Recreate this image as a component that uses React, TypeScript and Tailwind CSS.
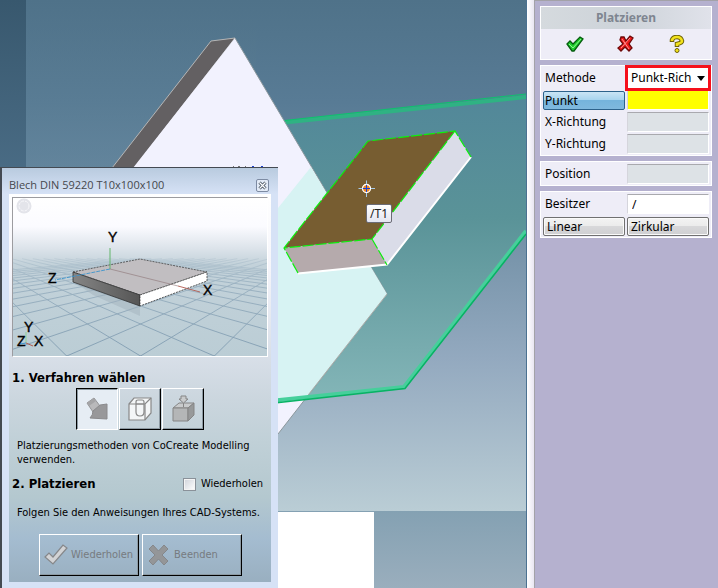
import { ReactNode } from "react";

const uiFont = "font-['Noto_Sans','Open_Sans',sans-serif]";
const titleFont = "font-['Open_Sans','Noto_Sans',sans-serif]";
const dialogFont = "font-['DejaVu_Sans_Condensed','DejaVu_Sans',sans-serif]";

const Scene = () => (
  <svg
    className="absolute inset-0 h-full w-full"
    viewBox="0 0 526 588"
    preserveAspectRatio="xMinYMin slice"
    aria-hidden="true"
  >
    <defs>
      <linearGradient id="sky" x1="0" y1="0" x2="0" y2="1">
        <stop offset="0" stopColor="#4f7289" />
        <stop offset="0.2" stopColor="#587b95" />
        <stop offset="0.45" stopColor="#7290a6" />
        <stop offset="0.7" stopColor="#93a9bf" />
        <stop offset="1" stopColor="#bacdd5" />
      </linearGradient>
      <linearGradient id="strip" x1="0" y1="0" x2="0" y2="1">
        <stop offset="0" stopColor="#38586e" />
        <stop offset="0.3" stopColor="#4a6c85" />
        <stop offset="0.85" stopColor="#819fb1" />
        <stop offset="1" stopColor="#9aaebd" />
      </linearGradient>
      <linearGradient id="skyTop" x1="0" y1="0" x2="0" y2="1">
        <stop offset="0" stopColor="#4f7289" />
        <stop offset="1" stopColor="#61849b" />
      </linearGradient>
      <linearGradient id="plane" x1="0" y1="0" x2="0" y2="1">
        <stop offset="0" stopColor="#528799" />
        <stop offset="0.4" stopColor="#5a9398" />
        <stop offset="1" stopColor="#84b6b8" />
      </linearGradient>
    </defs>
    <rect width="526" height="588" fill="url(#strip)" />
    <rect x="26" width="500" height="511" fill="url(#sky)" />
    <rect x="26" width="230" height="168" fill="url(#skyTop)" opacity="0.6" />
    <rect x="270" y="512" width="104" height="76" fill="#fff" />

    {/* green reference plane */}
    <path d="M280 122 526 95V232L404 388 270 402Z" fill="url(#plane)" />
    <path d="M280 123 526 97" stroke="#2fb283" strokeWidth="4" />
    <path d="M280 121 526 94" stroke="#0cc46c" strokeWidth="1" />

    {/* large plate */}
    <path d="M211 41 235 38 134 168H112Z" fill="#636062" stroke="#b5b5b5" />
    <path d="M235 38 387 294 278 434H100V210Z" fill="#f2f2fe" />
    <path d="M235 38 387 294 278 434" fill="none" stroke="#8b979c" strokeWidth="1" />
    <path d="M311 167 387 294 305 399 270 403V218Z" fill="#d7f3f3" />
    <path d="M387 294 305 399" stroke="#a9aeaa" />
    <path d="M270 401 404 387 526 231" fill="none" stroke="#46cf9b" strokeWidth="4" />
    <path d="M270 403.5 405 388.500 526 234" fill="none" stroke="#08b264" strokeWidth="1.500" />

    {/* part being placed */}
    <path d="M368 141 455 131 372 239 284 248Z" fill="#775d31" />
    <path d="M284 248 372 239 387 265 298 273Z" fill="#b5aaac" />
    <path d="M455 131 471 157 387 265 372 239Z" fill="#dadce8" />
    <path d="M298 273.500 387 264.500 471 157" fill="none" stroke="#fff" strokeWidth="2" />
    <path
      d="M298 273 284 248 368 141 455 131 471 157M455 131 372 239 284 248M372 239 387 265"
      fill="none"
      stroke="#0cf00c"
      strokeWidth="1.200"
      strokeDasharray="11 2"
    />

    {/* cursor */}
    <circle cx="366.500" cy="188.500" r="4" fill="#f28a1c" stroke="#fff" strokeWidth="1.300" />
    <path d="M358.500 188.500h4M371 188.500h4M366.500 180.500v4M366.500 193v4" stroke="#a9cbe8" strokeWidth="1" />
    <path d="M363 188.500h7M366.500 185v7" stroke="#1c3fd0" strokeWidth="1" />
    <path d="M233 166.500h1M238 166.500h2M245 166.500h1" stroke="#777" />
    <path d="M252 166.500h2M261 166.500h2" stroke="#1c3fd0" />
  </svg>
);

// Perspective floor grid, vanishing points left and right of the plate
const gridLines = Array.from({ length: 31 }, (_, i) => i - 15).flatMap((c) =>
  [1, -1].map((side) => {
    const point = (n: number) => {
      const depth = 2.56 + n / 2;
      return `${(127.5 + (side * (c * 2 + n) * 94.5) / depth).toFixed(1)} ${(44 + 292 / depth).toFixed(1)}`;
    };
    return `M${point(-1)}L${point(30)}`;
  }),
);

const Preview = () => (
  <svg
    className="block w-full border border-t-[#9c9ca0] border-l-[#9c9ca0] border-r-white border-b-white"
    viewBox="0 0 254 158"
    role="img"
    aria-label="Vorschau"
  >
    <defs>
      <linearGradient id="floor" x1="0" y1="0" x2="0" y2="1">
        <stop offset="0" stopColor="#ffffff" />
        <stop offset="0.18" stopColor="#fbfbff" />
        <stop offset="0.32" stopColor="#dce3ea" />
        <stop offset="0.42" stopColor="#c3d2da" />
        <stop offset="1" stopColor="#bbcdd5" />
      </linearGradient>
      <linearGradient id="fade" x1="0" y1="0" x2="0" y2="1">
        <stop offset="0.3" stopColor="#000" />
        <stop offset="0.55" stopColor="#999" />
        <stop offset="1" stopColor="#fff" />
      </linearGradient>
      <mask id="gridMask">
        <rect width="254" height="158" fill="url(#fade)" />
      </mask>
      <linearGradient id="side" x1="0" y1="0" x2="1" y2="0">
        <stop offset="0" stopColor="#858585" />
        <stop offset="1" stopColor="#555" />
      </linearGradient>
    </defs>
    <rect width="254" height="158" fill="url(#floor)" />
    <path d={gridLines.join("")} stroke="#7f9bb0" strokeWidth="0.900" mask="url(#gridMask)" />
    <circle cx="11" cy="8" r="7.500" fill="#e3e4ea" />
    <circle cx="11" cy="8" r="5" fill="none" stroke="#f8f8fb" strokeDasharray="3 1" />
    <path d="M61 84 127 108V118L80 97Z" fill="#9fb0ba" opacity="0.45" />
    <path d="M60 74 127 61 194 74 127 97Z" fill="#c1bec1" stroke="#444" strokeDasharray="2 1" strokeWidth="0.800" />
    <path d="M60 74 127 97V108L60 84Z" fill="url(#side)" stroke="#333" strokeWidth="0.800" />
    <path d="M127 97 194 74V83L127 108Z" fill="#fff" stroke="#333" strokeDasharray="2 1" strokeWidth="0.800" />
    <path d="M97 71V50" stroke="#63b56b" />
    <path d="M97 71 42 82" stroke="#3c94cd" strokeDasharray="4 1" strokeWidth="0.900" />
    <path d="M97 71 165 88" stroke="#8c7476" strokeWidth="0.600" />
    <path d="M165 88 187 94" stroke="#b05a50" strokeWidth="0.900" />
    <path d="M13 145V134" stroke="#8fcf96" />
    <path d="M13 145 20 148" stroke="#b05a50" />
    <path d="M13 145 7 146" stroke="#3c94cd" />
    <g fontFamily="Liberation Sans, sans-serif" fontSize="14" fill="#000" stroke="#000" strokeWidth="0.400">
      <text x="95" y="44">Y</text>
      <text x="35" y="85">Z</text>
      <text x="190" y="97">X</text>
      <text x="11" y="134">Y</text>
      <text x="4" y="148">Z</text>
      <text x="21" y="148">X</text>
    </g>
  </svg>
);

const raised = "border border-t-white border-l-white border-r-black border-b-black shadow-[inset_-1px_-1px_0_#8d9aa3]";

const PlacementDialog = () => (
  <section
    className={`relative mt-[167px] flex w-[278px] flex-1 flex-col border-t border-l-2 border-t-[#444a52] border-l-[#444a52] bg-[#d6e2f6] pr-[7px] pb-[6px] pl-[7px] text-[11px] leading-[14px] text-black ${dialogFont}`}
  >
    <header className="-mx-[7px] flex h-[26px] items-center justify-between bg-linear-to-b from-[#b9cbdf] to-[#d6e2f6] pt-[8px] pr-[9px] pl-[7px]">
      <h1 className={`text-[11px] text-[#46484d] ${titleFont}`}>Blech DIN 59220 T10x100x100</h1>
      <button
        type="button"
        aria-label="Schließen"
        className="flex h-[13px] w-[13px] items-center justify-center rounded-[2px] border border-[#7d8ba3] bg-[#e3ebf7]"
      >
        <svg width="9" height="9" viewBox="0 0 9 9">
          <path d="M1.500 1.500 7.500 7.500M7.500 1.500 1.500 7.500" stroke="#45505f" strokeWidth="3" />
          <path d="M1.500 1.500 7.500 7.500M7.500 1.500 1.500 7.500" stroke="#fff" strokeWidth="1.200" />
        </svg>
      </button>
    </header>
    <div className="flex flex-1 flex-col bg-[linear-gradient(to_bottom,#ffffff_0%,#f4f4fa_20%,#d8dfe8_42%,#cbd6de_53%,#c0d0d7_64%,#b4c8cf_78%,#a4bcd0_89%,#99afc0_100%)] px-[3px] pt-[3px]">
      <Preview />
      <h2 className="mt-[13px] text-[13px] leading-[16px] font-bold">1. Verfahren wählen</h2>
      <div className="mt-[2px] ml-[64px] flex gap-px">
        <button
          type="button"
          aria-label="Platzierungsmethode"
          aria-pressed="true"
          className="flex h-[42px] w-[42px] items-center justify-center border border-t-black border-l-black border-r-white border-b-white bg-[#e6edf4] shadow-[inset_1px_1px_0_#8d9aa3]"
        >
          <svg width="24" height="26" viewBox="0 0 24 26">
            <path d="M2 7 9 2 15 10 8 16Z" fill="#b9b9bb" stroke="#949496" />
            <path d="M2 7 9 2 11 5 4 10Z" fill="#a5a5a7" />
            <path d="M8 15 15 9 22 8V23L5 22Q8 19 8 15Z" fill="#98989a" stroke="#8a8a8c" />
          </svg>
        </button>
        <button type="button" aria-label="Quader" className={`flex h-[42px] w-[42px] items-center justify-center ${raised}`}>
          <svg width="26" height="26" viewBox="0 0 26 26" fill="none" stroke="#888" strokeWidth="1.200">
            <path d="M2 8 7 2H24V17L18 24H2Z" fill="#f4f6f7" />
            <path d="M2 8H18L24 2M18 8V24" />
            <path d="M9 16V6Q9 4 11 4H15Q17 4 17 6V16Q17 20 13 20T9 16ZM9 8H17" />
          </svg>
        </button>
        <button type="button" aria-label="Einfügen" className={`flex h-[42px] w-[42px] items-center justify-center ${raised}`}>
          <svg width="26" height="28" viewBox="0 0 26 28" stroke="#858585">
            <path d="M3 13 9 8H24L18 13Z" fill="#c9cbcc" />
            <path d="M3 13H18V26H3Z" fill="#b4b6b7" />
            <path d="M18 13 24 8V20L18 26Z" fill="#97999a" />
            <path d="M11 1H16V4H18L13.500 8 9 4H11Z" fill="#c9cbcc" />
            <path d="M13.500 8V12" />
          </svg>
        </button>
      </div>
      <p className="mt-[9px] pr-[8px] pl-[5px]">Platzierungsmethoden von CoCreate Modelling verwenden.</p>
      <div className="mt-[9px] flex items-center justify-between pr-[5px]">
        <h2 className="text-[13px] leading-[16px] font-bold">2. Platzieren</h2>
        <label className="flex items-center gap-[5px]">
          <input
            type="checkbox"
            className="h-[13px] w-[13px] appearance-none border border-[#8a9199] bg-linear-to-br from-[#cfd3da] to-white shadow-[inset_0_0_0_1px_#f4f4f4]"
          />
          Wiederholen
        </label>
      </div>
      <p className="mt-[14px] pl-[5px]">Folgen Sie den Anweisungen Ihres CAD-Systems.</p>
      <div className="mt-[14px] mb-[6px] flex gap-[3px] pl-[27px]">
        <button type="button" className={`flex h-[42px] w-[100px] items-center gap-[3px] pl-[4px] text-[#777b80] ${raised}`}>
          <svg className="shrink-0" width="24" height="22" viewBox="0 0 24 22">
            <path d="M1 13 5 9 9 13 19 1 23 4 9 20Z" fill="#d2d3d5" stroke="#85878a" strokeWidth="1.200" />
          </svg>
          Wiederholen
        </button>
        <button type="button" className={`flex h-[42px] w-[100px] items-center gap-[5px] pl-[5px] text-[#777b80] ${raised}`}>
          <svg className="shrink-0" width="21" height="22" viewBox="0 0 21 22">
            <path d="M5 1 10.500 7 16 1 20 5 14 11 20 17 16 21 10.500 15 5 21 1 17 7 11 1 5Z" fill="#949698" stroke="#85878a" />
          </svg>
          Beenden
        </button>
      </div>
    </div>
  </section>
);

const Card = ({ children }: { children: ReactNode }) => (
  <div className="border border-white bg-[#eeedf7] px-[2px] pt-px">{children}</div>
);

const fieldClass =
  "h-[20px] w-full min-w-0 border border-t-[#a9a9ae] border-l-[#d5d5dc] border-r-white border-b-white px-[4px] outline-none";

const Field = ({ id, label, value = "", color = "bg-[#dde2e6]" }: { id: string; label: string; value?: string; color?: string }) => (
  <div className="grid h-[22px] grid-cols-2 items-center gap-[2px]">
    <label htmlFor={id} className="pl-[2px]">
      {label}
    </label>
    <input id={id} type="text" defaultValue={value} className={`${fieldClass} ${color}`} />
  </div>
);

const greyButton =
  "h-[19px] rounded-[2px] border border-[#707070] bg-[linear-gradient(to_bottom,#f3f3f3_0%,#ebebeb_50%,#d8d8da_50%,#cfcfd2_100%)] px-[3px] text-left leading-[17px] shadow-[inset_0_0_0_1px_#fafafa]";

const PlacePanel = () => (
  <aside
    className={`flex w-[184px] shrink-0 flex-col gap-[5px] border-t border-l border-[#a3a2a8] bg-[#b5b1cf] pt-[5px] pr-[6px] pl-[5px] text-[12px] leading-[16px] text-black ${uiFont}`}
  >
    <div className="h-[54px] border border-white bg-[#eeedf7]">
      <h2 className="h-[22px] bg-linear-to-r from-[#d5dade] via-[#cdd3d9] to-[#e0e2ea] text-center text-[12px] leading-[22px] font-bold text-[#7e8590]">
        Platzieren
      </h2>
      <div className="grid grid-cols-3 justify-items-center px-[8px] pt-[6px]">
        <button type="button" aria-label="OK">
          <svg width="18" height="18" viewBox="0 0 18 18">
            <path d="M1 9 4 6 7 9 14 2 17 4 8 16H6Z" fill="#1fce2c" stroke="#075c10" strokeWidth="1.300" />
            <path d="M3 9 7 13 15 4" fill="none" stroke="#8df58f" />
          </svg>
        </button>
        <button type="button" aria-label="Abbrechen">
          <svg width="18" height="18" viewBox="0 0 18 18">
            <path d="M4 2H7L9 6 13 1 16 3 12 9 15 13 12 16 8 12 4 16 1 13 6 9 3 5Z" fill="#ee1a1a" stroke="#6d0808" strokeWidth="1.300" />
            <path d="M5 4 12 14M13 3 4 13" stroke="#ff9292" />
          </svg>
        </button>
        <button type="button" aria-label="Hilfe">
          <svg width="16" height="18" viewBox="0 0 16 18">
            <path d="M3 7V5Q4 2 8 2T13 6Q13 8 8 9V12" fill="none" stroke="#6e6205" strokeWidth="4.500" />
            <path d="M3 6V5Q4 2 8 2T13 6Q13 8 8 9V11" fill="none" stroke="#f2e21c" strokeWidth="2.600" />
            <circle cx="8" cy="15.500" r="2" fill="#f2e21c" stroke="#6e6205" />
          </svg>
        </button>
      </div>
    </div>
    <Card>
      <div className="grid h-[22px] grid-cols-2 items-center gap-[2px]">
        <label htmlFor="methode" className="pl-[2px]">
          Methode
        </label>
        <div className="relative px-px">
          <select
            id="methode"
            className="block h-[20px] w-full appearance-none bg-white pl-[3px] ring-[3px] ring-[#f5101c] outline-none"
          >
            <option>Punkt-Rich</option>
          </select>
          <svg className="pointer-events-none absolute top-[8px] right-[4px]" width="8" height="5" viewBox="0 0 8 5">
            <path d="M0 0H8L4 5Z" />
          </svg>
        </div>
      </div>
      <div className="grid h-[22px] grid-cols-2 items-center gap-[2px]">
        <button
          type="button"
          className="h-[19px] rounded-[2px] border border-[#2c628b] bg-[linear-gradient(to_bottom,#c9e4f5_0%,#a5d3ee_50%,#75b4dc_50%,#7fb9de_100%)] px-px text-left leading-[17px]"
        >
          Punkt
        </button>
        <input type="text" aria-label="Punkt" className={`${fieldClass} bg-[#ffff00]`} />
      </div>
      <Field id="x-richtung" label="X-Richtung" />
      <Field id="y-richtung" label="Y-Richtung" />
    </Card>
    <Card>
      <Field id="position" label="Position" />
    </Card>
    <Card>
      <Field id="besitzer" label="Besitzer" value="/" color="bg-white" />
      <div className="grid h-[22px] grid-cols-2 items-center gap-[2px]">
        <button type="button" className={greyButton}>
          Linear
        </button>
        <button type="button" className={greyButton}>
          Zirkular
        </button>
      </div>
    </Card>
  </aside>
);

export default function App() {
  return (
    <div className="flex min-h-screen bg-[#efedf7]">
      <main className="relative flex flex-1 flex-col overflow-hidden">
        <Scene />
        <div className={`absolute top-[204px] left-[366px] rounded-[2px] border border-[#6b6b75] bg-linear-to-b from-white to-[#e4e5f0] px-[3px] text-[12px] leading-[17px] text-[#222] ${uiFont}`}>
          /T1
        </div>
        <PlacementDialog />
      </main>
      <div className="w-[8px] shrink-0 border-l border-[#4b7191] bg-linear-to-r from-white to-[#e9e6f2]" />
      <PlacePanel />
    </div>
  );
}
